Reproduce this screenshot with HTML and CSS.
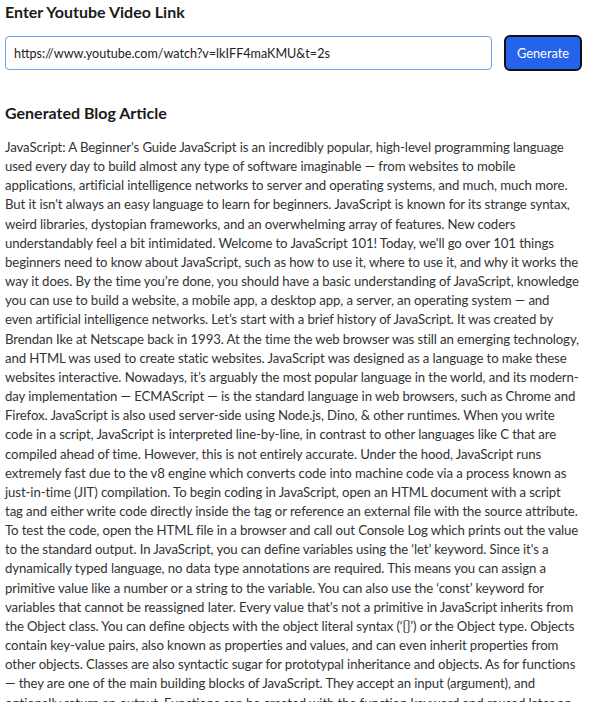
FILE: index.html
```html
<!DOCTYPE html>
<html lang="en">
<head>
<meta charset="utf-8">
<title>YouTube to Blog</title>
<link rel="stylesheet" href="styles.css">
</head>
<body>
<main class="page">
  <section class="link-section">
    <h2 class="section-title">Enter Youtube Video Link</h2>
    <form class="link-form">
      <input class="link-input" type="text" value="https://www.youtube.com/watch?v=lkIFF4maKMU&amp;t=2s">
      <button class="generate-btn" type="button">Generate</button>
    </form>
  </section>
  <section class="article-section">
    <h2 class="section-title">Generated Blog Article</h2>
    <p class="article-text">JavaScript: A Beginner's Guide JavaScript is an incredibly popular, high-level programming language<br>
used every day to build almost any type of software imaginable — from websites to mobile<br>
applications, artificial intelligence networks to server and operating systems, and much, much more.<br>
But it isn't always an easy language to learn for beginners. JavaScript is known for its strange syntax,<br>
weird libraries, dystopian frameworks, and an overwhelming array of features. New coders<br>
understandably feel a bit intimidated. Welcome to JavaScript 101! Today, we'll go over 101 things<br>
beginners need to know about JavaScript, such as how to use it, where to use it, and why it works the<br>
way it does. By the time you’re done, you should have a basic understanding of JavaScript, knowledge<br>
you can use to build a website, a mobile app, a desktop app, a server, an operating system — and<br>
even artificial intelligence networks. Let’s start with a brief history of JavaScript. It was created by<br>
Brendan Ike at Netscape back in 1993. At the time the web browser was still an emerging technology,<br>
and HTML was used to create static websites. JavaScript was designed as a language to make these<br>
websites interactive. Nowadays, it’s arguably the most popular language in the world, and its modern-<br>
day implementation — ECMAScript — is the standard language in web browsers, such as Chrome and<br>
Firefox. JavaScript is also used server-side using Node.js, Dino, &amp; other runtimes. When you write<br>
code in a script, JavaScript is interpreted line-by-line, in contrast to other languages like C that are<br>
compiled ahead of time. However, this is not entirely accurate. Under the hood, JavaScript runs<br>
extremely fast due to the v8 engine which converts code into machine code via a process known as<br>
just-in-time (JIT) compilation. To begin coding in JavaScript, open an HTML document with a script<br>
tag and either write code directly inside the tag or reference an external file with the source attribute.<br>
To test the code, open the HTML file in a browser and call out Console Log which prints out the value<br>
to the standard output. In JavaScript, you can define variables using the ‘let’ keyword. Since it's a<br>
dynamically typed language, no data type annotations are required. This means you can assign a<br>
primitive value like a number or a string to the variable. You can also use the ‘const’ keyword for<br>
variables that cannot be reassigned later. Every value that's not a primitive in JavaScript inherits from<br>
the Object class. You can define objects with the object literal syntax (‘{}’) or the Object type. Objects<br>
contain key-value pairs, also known as properties and values, and can even inherit properties from<br>
other objects. Classes are also syntactic sugar for prototypal inheritance and objects. As for functions<br>
— they are one of the main building blocks of JavaScript. They accept an input (argument), and<br>
optionally return an output. Functions can be created with the function keyword and reused later on.</p>
  </section>
</main>
</body>
</html>
```
FILE: styles.css
```css
* {
  box-sizing: border-box;
}

html, body {
  margin: 0;
  padding: 0;
  background: #ffffff;
}

body {
  font-family: "Segoe UI", Lato, "Noto Sans", sans-serif;
  color: #333333;
}

.page {
  padding: 1px 9px 0 5px;
}

.section-title {
  margin: 0;
  font-size: 16px;
  line-height: 21px;
  font-weight: 700;
  color: #1a1a1a;
}

.link-form {
  display: flex;
  align-items: center;
  gap: 12px;
  margin: 13px 0 0;
}

.link-input {
  flex: 1;
  height: 34px;
  padding: 0 8px;
  border: 1px solid #68a3ee;
  border-radius: 4px;
  font-family: inherit;
  font-size: 12.6px;
  color: #222222;
  background: #ffffff;
  outline: none;
}

.generate-btn {
  width: 78px;
  height: 36px;
  padding: 0;
  border: 2px solid #111111;
  border-radius: 6px;
  background: #2563eb;
  color: #ffffff;
  font-family: inherit;
  font-size: 12.8px;
}

.article-section {
  margin-top: 31px;
}

.article-text {
  margin: 15px 0 0;
  font-size: 13.2px;
  letter-spacing: -0.1px;
  line-height: 19.15px;
  white-space: nowrap;
}
```
